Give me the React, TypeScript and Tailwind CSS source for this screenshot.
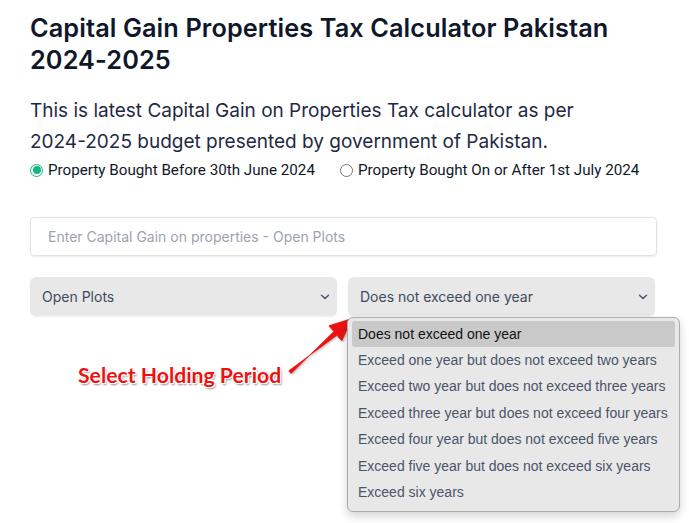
import React from "react";

const items = [
  "Does not exceed one year",
  "Exceed one year but does not exceed two years",
  "Exceed two year but does not exceed three years",
  "Exceed three year but does not exceed four years",
  "Exceed four year but does not exceed five years",
  "Exceed five year but does not exceed six years",
  "Exceed six years",
];

function Chevron() {
  return (
    <svg width="10" height="6" viewBox="0 0 10 6" className="shrink-0">
      <path d="M1.5 1.2 L5 4.6 L8.5 1.2" fill="none" stroke="#4a5568" strokeWidth="1.4" strokeLinecap="round" strokeLinejoin="round" />
    </svg>
  );
}

export default function App() {
  return (
    <div className="relative w-[689px] h-[523px] bg-white overflow-hidden font-['Inter',sans-serif]">
      <div className="pl-[30px] pt-[12px]">
        <h1 className="text-[25.3px] leading-[32px] font-semibold text-[#0f172a] tracking-[0.1px]">
          Capital Gain Properties Tax Calculator Pakistan
          <br />
          2024-2025
        </h1>
        <p className="mt-[19px] text-[19px] leading-[31px] text-[#1e2a44] w-[600px]">
          This is latest Capital Gain on Properties Tax calculator as per
          <br />
          2024-2025 budget presented by government of Pakistan.
        </p>
        <div className="mt-[3px] flex items-center h-[20px] font-['Roboto',sans-serif] text-[15.2px] text-[#111827]">
          <span className="flex items-center">
            <span className="w-[13px] h-[13px] rounded-full border border-[#10b981] flex items-center justify-center">
              <span className="w-[8px] h-[8px] rounded-full bg-[#10b981]" />
            </span>
            <span className="ml-[5px]">Property Bought Before 30th June 2024</span>
          </span>
          <span className="flex items-center ml-[25px]">
            <span className="w-[13px] h-[13px] rounded-full border border-[#767676] bg-white" />
            <span className="ml-[5px]">Property Bought On or After 1st July 2024</span>
          </span>
        </div>
        <div className="mt-[37px] w-[627px] h-[39px] rounded-[4px] border border-[#e3e3e3] shadow-[0_1px_2px_rgba(0,0,0,0.08)] flex items-center pl-[17px] text-[14px] text-[#9ca3af]">
          Enter Capital Gain on properties - Open Plots
        </div>
        <div className="mt-[21px] flex gap-[11px]">
          <div className="w-[307px] h-[39px] rounded-[6px] bg-[#e8e8e8] shadow-[0_1px_2px_rgba(0,0,0,0.06)] flex items-center justify-between pl-[12px] pr-[7px] text-[14px] text-[#3f4b5e]">
            <span>Open Plots</span>
            <Chevron />
          </div>
          <div className="w-[307px] h-[39px] rounded-[6px] bg-[#e8e8e8] shadow-[0_1px_2px_rgba(0,0,0,0.06)] flex items-center justify-between pl-[12px] pr-[7px] text-[14px] text-[#3f4b5e]">
            <span>Does not exceed one year</span>
            <Chevron />
          </div>
        </div>
      </div>

      {/* annotation */}
      <div className="absolute left-[78px] top-[361px] font-['Lato',sans-serif] font-bold text-[21.2px] leading-[28px] text-[#ee1111] [text-shadow:0_0_1px_#fff,1px_1px_0_#fff,-1px_-1px_0_#fff,1px_-1px_0_#fff,-1px_1px_0_#fff,1.5px_2px_2px_rgba(0,0,0,0.45)]">
        Select Holding Period
      </div>
      <svg className="absolute left-0 top-0 pointer-events-none" width="689" height="523">
        <polygon
          points="291,373.5 333.8,331.6 328.9,325.8 352,318.5 341.8,340.8 336.8,335.2 288.8,370.8"
          fill="#ee1111"
          stroke="#ee1111"
          strokeWidth="0.8"
          strokeLinejoin="round"
          style={{ filter: "drop-shadow(1px 1px 1px rgba(0,0,0,0.3))" }}
        />
      </svg>

      {/* dropdown list */}
      <div className="absolute left-[347px] top-[317px] w-[333px] h-[195px] rounded-[6px] border border-[#acacac] bg-[#e8e8e8] shadow-[0_4px_10px_rgba(0,0,0,0.18)] px-[4px] pt-[3px] font-['Liberation_Sans',Arial,sans-serif] text-[14px]">
        {items.map((t, i) => (
          <div
            key={t}
            className={
              i === 0
                ? "h-[26px] leading-[26px] pl-[6px] rounded-[3px] bg-[#c9c9c9] text-[#111]"
                : "h-[26.4px] leading-[26.4px] pl-[6px] text-[#4a5568]"
            }
          >
            {t}
          </div>
        ))}
      </div>
    </div>
  );
}
